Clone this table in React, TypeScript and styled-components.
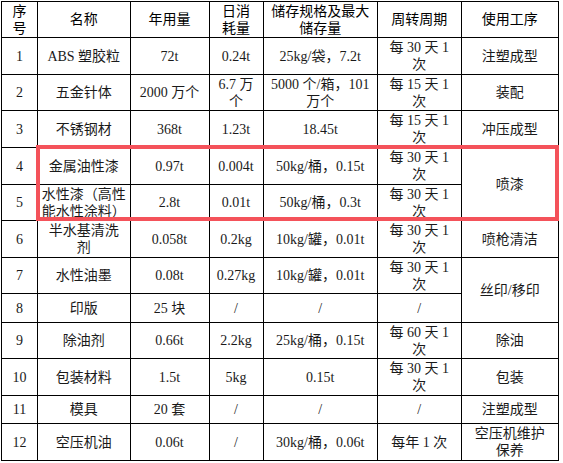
import React from "react";
import styled, { createGlobalStyle } from "styled-components";

const Global = createGlobalStyle`
  html, body { margin: 0; padding: 0; background: #ffffff; }
  body { font-family: "Liberation Serif", "Noto Sans CJK SC", serif; }
`;

const Page = styled.div`
  padding: 1px 0 0 1px;
`;

const Frame = styled.div`
  position: relative;
  width: 558px;
`;

const Table = styled.table`
  border-collapse: collapse;
  table-layout: fixed;
  width: 557px;
  border: 1.5px solid #000;
`;

const HeadCell = styled.th`
  border: 1px solid #000;
  padding: 0;
  font-family: "Liberation Serif", "Noto Sans CJK SC", sans-serif;
  font-weight: 400;
  font-size: 14px;
  line-height: 17px;
  color: #000;
  text-align: center;
  vertical-align: middle;
`;

const Row = styled.tr<{ $h: number }>`
  height: ${(p) => p.$h}px;
`;

const Cell = styled.td`
  border: 1px solid #000;
  padding: 0;
  font-family: "Liberation Serif", "Noto Sans CJK SC", serif;
  font-weight: 400;
  font-size: 14px;
  line-height: 17px;
  color: #1a1a1a;
  text-align: center;
  vertical-align: middle;
`;

const Highlight = styled.div`
  position: absolute;
  left: 35px;
  top: 144px;
  width: 523px;
  height: 76px;
  box-sizing: border-box;
  border: 4px solid #f4525a;
  pointer-events: none;
`;

type C = { t: React.ReactNode; rs?: number } | null;

const br = (a: string, b: string) => (
  <>
    {a}
    <br />
    {b}
  </>
);

const heights = [37, 36, 37, 37, 36, 37, 36, 29, 36, 37, 28, 37];

const rows: C[][] = [
  [{ t: "1" }, { t: "ABS 塑胶粒" }, { t: "72t" }, { t: "0.24t" }, { t: "25kg/袋，7.2t" }, { t: br("每 30 天 1", "次") }, { t: "注塑成型" }],
  [{ t: "2" }, { t: "五金针体" }, { t: "2000 万个" }, { t: br("6.7 万", "个") }, { t: br("5000 个/箱，101", "万个") }, { t: br("每 15 天 1", "次") }, { t: "装配" }],
  [{ t: "3" }, { t: "不锈钢材" }, { t: "368t" }, { t: "1.23t" }, { t: "18.45t" }, { t: br("每 15 天 1", "次") }, { t: "冲压成型" }],
  [{ t: "4" }, { t: "金属油性漆" }, { t: "0.97t" }, { t: "0.004t" }, { t: "50kg/桶，0.15t" }, { t: br("每 30 天 1", "次") }, { t: "喷漆", rs: 2 }],
  [{ t: "5" }, { t: br("水性漆（高性", "能水性涂料）") }, { t: "2.8t" }, { t: "0.01t" }, { t: "50kg/桶，0.3t" }, { t: br("每 30 天 1", "次") }, null],
  [{ t: "6" }, { t: br("半水基清洗", "剂") }, { t: "0.058t" }, { t: "0.2kg" }, { t: "10kg/罐，0.01t" }, { t: br("每 30 天 1", "次") }, { t: "喷枪清洁" }],
  [{ t: "7" }, { t: "水性油墨" }, { t: "0.08t" }, { t: "0.27kg" }, { t: "10kg/罐，0.01t" }, { t: br("每 30 天 1", "次") }, { t: "丝印/移印", rs: 2 }],
  [{ t: "8" }, { t: "印版" }, { t: "25 块" }, { t: "/" }, { t: "/" }, { t: "/" }, null],
  [{ t: "9" }, { t: "除油剂" }, { t: "0.66t" }, { t: "2.2kg" }, { t: "25kg/桶，0.15t" }, { t: br("每 60 天 1", "次") }, { t: "除油" }],
  [{ t: "10" }, { t: "包装材料" }, { t: "1.5t" }, { t: "5kg" }, { t: "0.15t" }, { t: br("每 30 天 1", "次") }, { t: "包装" }],
  [{ t: "11" }, { t: "模具" }, { t: "20 套" }, { t: "/" }, { t: "/" }, { t: "/" }, { t: "注塑成型" }],
  [{ t: "12" }, { t: "空压机油" }, { t: "0.06t" }, { t: "/" }, { t: "30kg/桶，0.06t" }, { t: "每年 1 次" }, { t: br("空压机维护", "保养") }],
];

const widths = [36, 92.5, 79, 54, 114.5, 83.5, 97.5];

export default function App() {
  return (
    <>
      <Global />
      <Page>
        <Frame>
          <Table>
            <colgroup>
              {widths.map((w, i) => (
                <col key={i} style={{ width: w }} />
              ))}
            </colgroup>
            <thead>
              <Row $h={36}>
                <HeadCell>{br("序", "号")}</HeadCell>
                <HeadCell>名称</HeadCell>
                <HeadCell>年用量</HeadCell>
                <HeadCell>{br("日消", "耗量")}</HeadCell>
                <HeadCell>{br("储存规格及最大", "储存量")}</HeadCell>
                <HeadCell>周转周期</HeadCell>
                <HeadCell>使用工序</HeadCell>
              </Row>
            </thead>
            <tbody>
              {rows.map((r, i) => (
                <Row key={i} $h={heights[i]}>
                  {r.map((c, j) =>
                    c ? (
                      <Cell key={j} rowSpan={c.rs}>
                        {c.t}
                      </Cell>
                    ) : null
                  )}
                </Row>
              ))}
            </tbody>
          </Table>
          <Highlight />
        </Frame>
      </Page>
    </>
  );
}
